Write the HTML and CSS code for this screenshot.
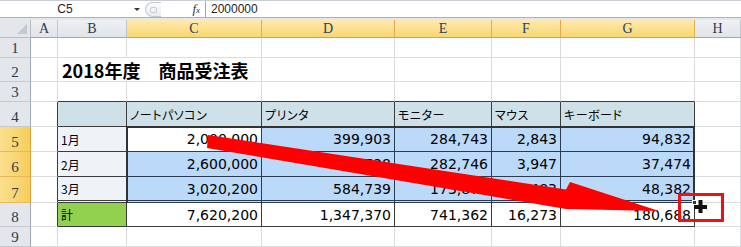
FILE: index.html
```html
<!DOCTYPE html>
<html lang="ja">
<head>
<meta charset="UTF-8" />
<title>商品受注表</title>
<link rel="stylesheet" href="styles.css">
</head>
<body>

<div class="fbar">
  <div class="namebox">C5</div>
  <div class="dd"></div>
  <div class="grip"></div>
  <div class="fx"><i>f</i><span>x</span></div>
  <div class="fval">2000000</div>
</div>
<div class="band"></div>

<div class="sheet">
  <!-- column headers -->
  <div class="corner"></div>
  <div class="ch">A</div>
  <div class="ch">B</div>
  <div class="ch on">C</div>
  <div class="ch on">D</div>
  <div class="ch on">E</div>
  <div class="ch on">F</div>
  <div class="ch on">G</div>
  <div class="ch">H</div>

  <!-- row 1 -->
  <div class="rh">1</div>
  <div class="c"></div><div class="c"></div><div class="c"></div><div class="c"></div>
  <div class="c"></div><div class="c"></div><div class="c"></div><div class="c"></div>

  <!-- row 2 -->
  <div class="rh">2</div>
  <div class="c"></div>
  <div class="c ttl">2018年度　商品受注表</div>
  <div class="c"></div><div class="c"></div><div class="c"></div>
  <div class="c"></div><div class="c"></div><div class="c"></div>

  <!-- row 3 -->
  <div class="rh">3</div>
  <div class="c"></div>
  <div class="c et"></div><div class="c et"></div><div class="c et"></div>
  <div class="c et"></div><div class="c et"></div><div class="c et"></div>
  <div class="c"></div>

  <!-- row 4 -->
  <div class="rh">4</div>
  <div class="c el"></div>
  <div class="c t hd"></div>
  <div class="c t hd">ノートパソコン</div>
  <div class="c t hd">プリンタ</div>
  <div class="c t hd">モニター</div>
  <div class="c t hd">マウス</div>
  <div class="c t hd">キーボード</div>
  <div class="c"></div>

  <!-- row 5 -->
  <div class="rh on">5</div>
  <div class="c el"></div>
  <div class="c t mo">1月</div>
  <div class="c t num">2,000,000</div>
  <div class="c t num sb">399,903</div>
  <div class="c t num sb">284,743</div>
  <div class="c t num sb">2,843</div>
  <div class="c t num sb">94,832</div>
  <div class="c"></div>

  <!-- row 6 -->
  <div class="rh on">6</div>
  <div class="c el"></div>
  <div class="c t mo">2月</div>
  <div class="c t num sb">2,600,000</div>
  <div class="c t num sb">362,728</div>
  <div class="c t num sb">282,746</div>
  <div class="c t num sb">3,947</div>
  <div class="c t num sb">37,474</div>
  <div class="c"></div>

  <!-- row 7 -->
  <div class="rh on">7</div>
  <div class="c el"></div>
  <div class="c t mo dbl">3月</div>
  <div class="c t num sb dbl">3,020,200</div>
  <div class="c t num sb dbl">584,739</div>
  <div class="c t num sb dbl">173,873</div>
  <div class="c t num sb dbl">9,483</div>
  <div class="c t num sb dbl">48,382</div>
  <div class="c"></div>

  <!-- row 8 -->
  <div class="rh">8</div>
  <div class="c el"></div>
  <div class="c t tot">計</div>
  <div class="c t num">7,620,200</div>
  <div class="c t num">1,347,370</div>
  <div class="c t num">741,362</div>
  <div class="c t num">16,273</div>
  <div class="c t num">180,688</div>
  <div class="c"></div>

  <!-- row 9 -->
  <div class="rh">9</div>
  <div class="c"></div><div class="c"></div><div class="c"></div><div class="c"></div>
  <div class="c"></div><div class="c"></div><div class="c"></div><div class="c"></div>

  <div class="selbox"><span class="handle"></span></div>
</div>

<!-- annotation over the sheet -->
<svg class="note" width="741" height="247" viewBox="0 0 741 247">
  <polygon fill="#ff0000" points="208,135 566,189.5 570,182 659,211 566,209 207,148" />
  <rect x="679.5" y="194.5" width="43" height="26" fill="none" stroke="#ee1111" stroke-width="3" />
  <rect x="694" y="205" width="13" height="4" fill="#111" />
  <rect x="698.5" y="200" width="4" height="13" fill="#111" />
</svg>

</body>
</html>
```

FILE: styles.css
```css
* {
  box-sizing: border-box;
}
body {
  margin: 0;
  width: 741px;
  height: 247px;
  overflow: hidden;
  position: relative;
  background: #fff;
  font-family: 'Liberation Sans', Arial, sans-serif;
  color: #000;
}

/* formula bar */
.fbar {
  display: flex;
  align-items: center;
  height: 18px;
  border-top: 1px solid #c9ced5;
  border-bottom: 1px solid #aab2bd;
  font-size: 12px;
  color: #1e1e1e;
}
.namebox {
  width: 130px;
  text-align: center;
}
.dd {
  width: 14px;
  height: 16px;
  position: relative;
}
.dd::after {
  content: '';
  position: absolute;
  left: 4px;
  top: 7px;
  border-left: 3px solid transparent;
  border-right: 3px solid transparent;
  border-top: 3px solid #333;
}
.grip {
  width: 16px;
  height: 15px;
  margin-left: 1px;
  border: 1px solid #c3c8cf;
  border-right: 0;
  border-radius: 8px 0 0 8px;
  background: linear-gradient(#fbfbfc, #e8ebee);
  position: relative;
}
.grip::after {
  content: '';
  position: absolute;
  left: 4px;
  top: 4px;
  width: 5px;
  height: 4px;
  border-radius: 2px;
  border: 1px solid #c9cdd3;
}
.fx {
  width: 45px;
  height: 16px;
  padding-right: 5px;
  border-right: 1px solid #a1a9b3;
  text-align: right;
  font-family: 'Liberation Serif', serif;
  font-size: 13px;
  line-height: 16px;
  color: #333;
}
.fx span {
  font-size: 9px;
  font-style: italic;
}
.fval {
  padding-left: 5px;
}
.band {
  height: 2px;
  background: #e4e7eb;
}

/* sheet */
.sheet {
  display: grid;
  grid-template-columns: 31px 27px 69px 135px 133px 97px 69px 134px 1fr;
  grid-template-rows: 18px 20px 24px 20px 25px 25px 25px 26px 24px 20px;
  position: relative;
}
.corner {
  background: #e3e6eb;
  border-right: 1px solid #b7bdc6;
  border-bottom: 1px solid #b7bdc6;
  position: relative;
}
.corner::after {
  content: '';
  position: absolute;
  right: 3px;
  bottom: 3px;
  border-left: 10px solid transparent;
  border-bottom: 10px solid #c4c9d0;
}
.ch {
  background: linear-gradient(#eef0f3, #e1e4e9);
  border-right: 1px solid #c1c6ce;
  border-bottom: 1px solid #9fa8b5;
  display: flex;
  align-items: center;
  justify-content: center;
  font-family: 'Liberation Serif', serif;
  font-size: 14px;
  color: #2d3a4b;
}
.ch.on {
  background: linear-gradient(#fdeab1, #f9d66f);
  border-right-color: #e3a94e;
  border-bottom-color: #e19f3a;
  color: #27405a;
}
.rh {
  background: #e3e6eb;
  border-right: 1px solid #9fa8b5;
  border-bottom: 1px solid #c5cad1;
  display: flex;
  align-items: flex-end;
  justify-content: center;
  padding-bottom: 1px;
  font-family: 'Liberation Serif', serif;
  font-size: 15px;
  line-height: 16px;
  color: #2d3a4b;
}
.rh.on {
  background: linear-gradient(90deg, #fbe08e, #f7cd5c);
  border-right-color: #e19f3a;
  border-bottom-color: #e8b661;
}

/* cells */
.c {
  border-right: 1px solid #dadcdf;
  border-bottom: 1px solid #dadcdf;
  display: flex;
  align-items: center;
  padding: 0 3px;
  white-space: nowrap;
  font-family: 'Noto Sans CJK JP', sans-serif;
  font-size: 12px;
}
.ttl {
  border-right: 0;
  font-size: 18px;
  font-weight: bold;
  padding-left: 4px;
  overflow: visible;
}
.et {
  border-bottom-color: #3c3c3c;
}
.el {
  border-right-color: #3c3c3c;
}
.t {
  border-right-color: #3c3c3c;
  border-bottom-color: #3c3c3c;
}
.dbl {
  border-bottom: 3px double #3c3c3c;
}
.hd {
  background: #cfe1e8;
  font-feature-settings: "palt";
  letter-spacing: 0.5px;
}
.mo {
  background: #eef3f8;
}
.tot {
  background: #92d050;
}
.num {
  justify-content: flex-end;
  font-family: 'DejaVu Sans', Verdana, sans-serif;
  font-size: 14px;
  padding-right: 3px;
}
.sb {
  background: #bbd9f8;
  border-right-color: #2b3b52;
  border-bottom-color: #2b3b52;
}

/* selection outline C5:G7 */
.selbox {
  grid-column: 4 / 9;
  grid-row: 6 / 9;
  position: absolute;
  top: -1px;
  left: -1px;
  right: 0;
  bottom: 0;
  border: 2px solid #333;
  border-bottom: 0;
  pointer-events: none;
}
.handle {
  position: absolute;
  right: -4px;
  bottom: -2px;
  width: 5px;
  height: 5px;
  background: #333;
  border: 1px solid #fff;
}

.note {
  position: absolute;
  left: 0;
  top: 0;
  pointer-events: none;
}
```
